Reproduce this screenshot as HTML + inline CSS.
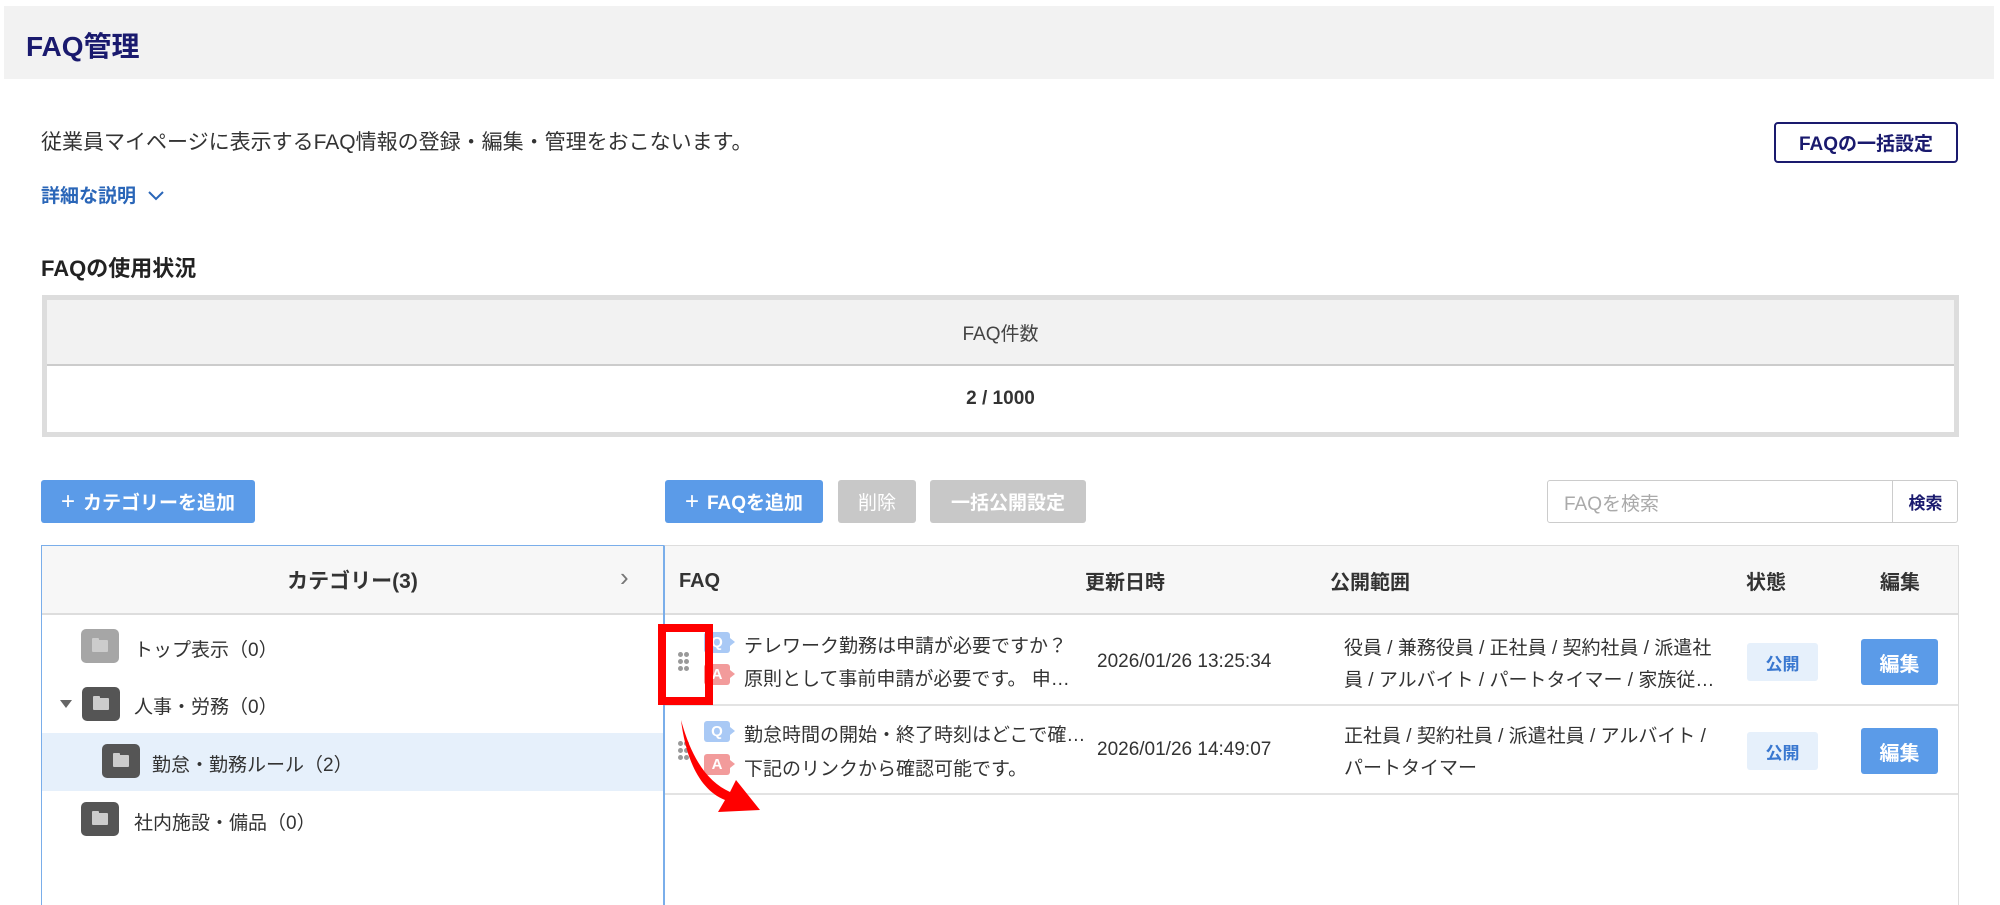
<!DOCTYPE html>
<html><head><meta charset="utf-8"><style>
*{box-sizing:border-box;margin:0;padding:0}
body{width:2000px;height:896px;overflow:hidden;background:#fff;font-family:"Liberation Sans","Noto Sans CJK JP",sans-serif;color:#333;position:relative}
.a{position:absolute}
.hdr{left:4px;top:6px;width:1990px;height:73px;background:#f2f2f2}
.btn{position:absolute;border-radius:3px;color:#fff;font-weight:bold;font-size:19px;display:flex;align-items:center;justify-content:center}
.blue{background:#5b9be8}
.gray{background:#c8c8c8}
.th{font-weight:bold;font-size:20px;color:#333}
.fold{position:absolute;width:38px;height:34px;border-radius:5px;background:#555}
.fold:after{content:"";position:absolute;left:11px;top:11px;width:16px;height:12px;background:#ccc;border-radius:1px}
.fold:before{content:"";position:absolute;left:11px;top:9px;width:7px;height:4px;background:#ccc;border-radius:1px}
.tt{position:absolute;font-size:19px;color:#333}
.bq,.ba{position:absolute;width:26px;height:21px;border-radius:3px;color:#fff;font-weight:bold;font-size:15px;text-align:center;line-height:21px}
.bq{background:#a9c9f5}.ba{background:#f29b9b}
.bq:after,.ba:after{content:"";position:absolute;right:-5px;top:6px;border-left:5px solid;border-top:4px solid transparent;border-bottom:4px solid transparent}
.bq:after{border-left-color:#a9c9f5}.ba:after{border-left-color:#f29b9b}
.pub{position:absolute;width:71px;height:38px;background:#e6f0fb;color:#3a78d0;font-weight:bold;font-size:17px;border-radius:3px;display:flex;align-items:center;justify-content:center}
.ed{position:absolute;width:77px;height:46px;background:#5b9be8;color:#fff;font-weight:bold;font-size:20px;border-radius:3px;display:flex;align-items:center;justify-content:center}
.dot{position:absolute;width:5px;height:5px;border-radius:50%;background:#999}
</style></head><body>
<div class="a hdr"></div>
<div class="a" style="left:26px;top:25px;font-size:28px;font-weight:bold;color:#1a1a6e">FAQ管理</div>
<div class="a" style="left:41px;top:126px;font-size:21px;color:#333">従業員マイページに表示するFAQ情報の登録・編集・管理をおこないます。</div>
<div class="a" style="left:41px;top:181px;font-size:19px;font-weight:bold;color:#2a66b8">詳細な説明 <svg width="18" height="12" style="margin-left:6px" viewBox="0 0 18 12"><path d="M2 2 L9 9 L16 2" fill="none" stroke="#2a66b8" stroke-width="2"/></svg></div>
<div class="a" style="left:1774px;top:122px;width:184px;height:41px;border:2px solid #1a1a6e;border-radius:4px;font-weight:bold;font-size:19px;color:#1a1a6e;display:flex;align-items:center;justify-content:center">FAQの一括設定</div>
<div class="a" style="left:41px;top:251px;font-size:22px;font-weight:bold;color:#222">FAQの使用状況</div>
<div class="a" style="left:42px;top:295px;width:1917px;height:142px;border:5px solid #ddd;background:#fff">
 <div style="height:66px;background:#f2f2f2;border-bottom:2px solid #ccc;display:flex;align-items:center;justify-content:center;font-size:19px;color:#444">FAQ件数</div>
 <div style="height:66px;display:flex;align-items:center;justify-content:center;font-size:19px;font-weight:bold;color:#333">2 / 1000</div>
</div>
<div class="btn blue" style="left:41px;top:480px;width:214px;height:43px"><span style="font-size:24px;font-weight:normal;margin-right:8px">+</span>カテゴリーを追加</div>
<div class="btn blue" style="left:665px;top:480px;width:158px;height:43px"><span style="font-size:24px;font-weight:normal;margin-right:8px">+</span>FAQを追加</div>
<div class="btn gray" style="left:838px;top:480px;width:78px;height:43px;font-weight:normal">削除</div>
<div class="btn gray" style="left:930px;top:480px;width:156px;height:43px">一括公開設定</div>
<div class="a" style="left:1547px;top:480px;width:411px;height:43px;border:1px solid #ccc;border-radius:3px">
 <div class="a" style="left:16px;top:8px;font-size:19px;color:#aaa">FAQを検索</div>
 <div class="a" style="left:344px;top:0;width:66px;height:41px;border-left:1px solid #ccc;display:flex;align-items:center;justify-content:center;font-weight:bold;font-size:17px;color:#1a1a6e">検索</div>
</div>
<!-- left panel -->
<div class="a" style="left:41px;top:545px;width:623px;height:360px;border:1px solid #7aaeea;border-bottom:none">
 <div style="height:69px;background:#f7f7f7;border-bottom:2px solid #ddd;display:flex;align-items:center;justify-content:center;font-weight:bold;font-size:21px;color:#333">カテゴリー(3)</div>
 <div class="a" style="left:578px;top:16px;font-size:26px;color:#777">&#8250;</div>
 <div class="a" style="left:0;top:187px;width:621px;height:58px;background:#e6f0fb"></div>
</div>
<div class="fold" style="left:81px;top:629px;background:#a6a6a6"></div>
<div class="tt" style="left:134px;top:635px">トップ表示（0）</div>
<div class="a" style="left:60px;top:700px;border-top:8px solid #666;border-left:6px solid transparent;border-right:6px solid transparent"></div>
<div class="fold" style="left:82px;top:687px"></div>
<div class="tt" style="left:134px;top:692px">人事・労務（0）</div>
<div class="fold" style="left:102px;top:744px"></div>
<div class="tt" style="left:152px;top:750px">勤怠・勤務ルール（2）</div>
<div class="fold" style="left:81px;top:802px"></div>
<div class="tt" style="left:134px;top:808px">社内施設・備品（0）</div>
<!-- right table -->
<div class="a" style="left:664px;top:545px;width:1295px;height:360px;border:1px solid #ddd;border-left:1px solid #7aaeea;border-bottom:none">
 <div style="height:69px;background:#f7f7f7;border-bottom:2px solid #ddd"></div>
 <div class="a" style="left:0;top:158px;width:1293px;height:2px;background:#e3e3e3"></div>
 <div class="a" style="left:0;top:247px;width:1293px;height:2px;background:#e3e3e3"></div>
</div>
<div class="a th" style="left:679px;top:570px">FAQ</div>
<div class="a th" style="left:1085px;top:566px">更新日時</div>
<div class="a th" style="left:1330px;top:566px">公開範囲</div>
<div class="a th" style="left:1746px;top:566px">状態</div>
<div class="a th" style="left:1880px;top:566px">編集</div>
<!-- row1 -->
<div class="dot" style="left:678px;top:652px"></div><div class="dot" style="left:684px;top:652px"></div>
<div class="dot" style="left:678px;top:659px"></div><div class="dot" style="left:684px;top:659px"></div>
<div class="dot" style="left:678px;top:666px"></div><div class="dot" style="left:684px;top:666px"></div>
<div class="bq" style="left:704px;top:632px">Q</div>
<div class="ba" style="left:704px;top:664px">A</div>
<div class="tt" style="left:744px;top:631px">テレワーク勤務は申請が必要ですか？</div>
<div class="tt" style="left:744px;top:664px">原則として事前申請が必要です。 申…</div>
<div class="tt" style="left:1097px;top:651px">2026/01/26 13:25:34</div>
<div class="tt" style="left:1344px;top:633px;line-height:32px">役員 / 兼務役員 / 正社員 / 契約社員 / 派遣社<br>員 / アルバイト / パートタイマー / 家族従…</div>
<div class="pub" style="left:1747px;top:643px">公開</div>
<div class="ed" style="left:1861px;top:639px">編集</div>
<!-- row2 -->
<div class="dot" style="left:678px;top:741px"></div><div class="dot" style="left:684px;top:741px"></div>
<div class="dot" style="left:678px;top:748px"></div><div class="dot" style="left:684px;top:748px"></div>
<div class="dot" style="left:678px;top:755px"></div><div class="dot" style="left:684px;top:755px"></div>
<div class="bq" style="left:704px;top:721px">Q</div>
<div class="ba" style="left:704px;top:754px">A</div>
<div class="tt" style="left:744px;top:720px">勤怠時間の開始・終了時刻はどこで確…</div>
<div class="tt" style="left:744px;top:754px">下記のリンクから確認可能です。</div>
<div class="tt" style="left:1097px;top:739px">2026/01/26 14:49:07</div>
<div class="tt" style="left:1344px;top:721px;line-height:32px">正社員 / 契約社員 / 派遣社員 / アルバイト /<br>パートタイマー</div>
<div class="pub" style="left:1747px;top:732px">公開</div>
<div class="ed" style="left:1861px;top:728px">編集</div>
<!-- red box -->
<div class="a" style="left:658px;top:624px;width:55px;height:81px;border:8px solid #f00"></div>
<svg class="a" style="left:0;top:0" width="2000" height="896"><path d="M681 720 C686 760 700 790 725 800 L718 812 L760 810 L736 780 L730 792 C708 782 692 760 681 720 Z" fill="#f00"/></svg>
</body></html>
